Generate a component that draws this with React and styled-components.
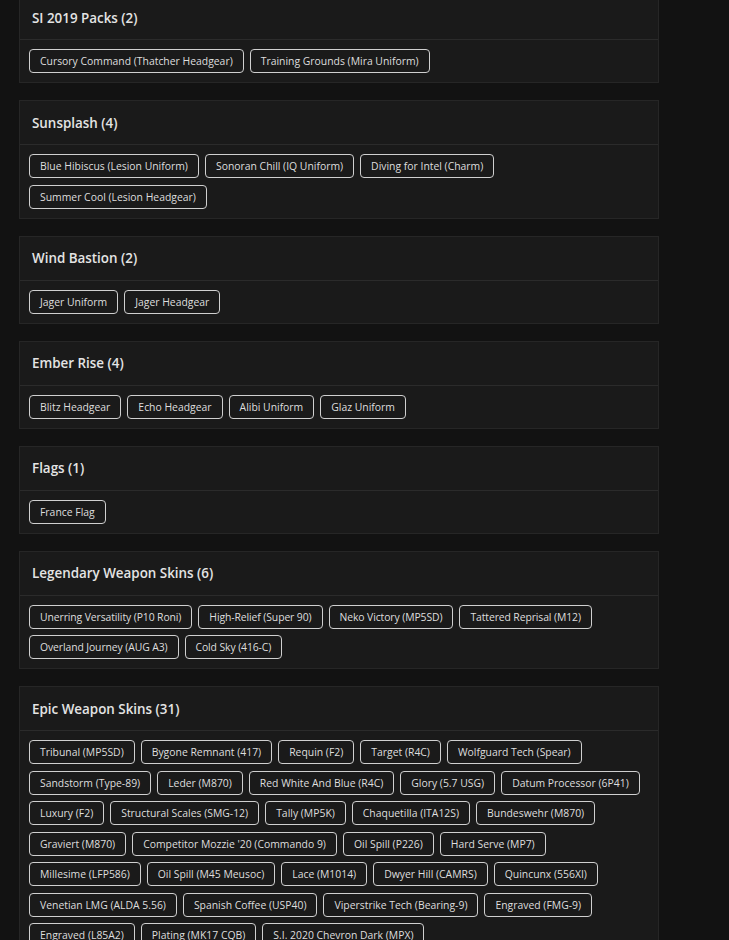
import React from "react";
import styled, { createGlobalStyle } from "styled-components";

const Global = createGlobalStyle`
  html, body { margin: 0; padding: 0; background: #121212; }
  body { font-family: "Open Sans", "DejaVu Sans", sans-serif; color: #e2e2e2; }
`;

const Page = styled.div`
  display: flex;
  flex-direction: column;
  gap: 17px;
  width: 640px;
  padding-left: 19px;
  margin-top: -5px;
`;

const Card = styled.section`
  background: #1a1a1a;
  border: 1px solid #262626;
  box-sizing: border-box;
`;

const Header = styled.div`
  height: 43px;
  display: flex;
  align-items: center;
  padding: 0 12px;
  border-bottom: 1px solid #2b2b2b;
  font-size: 13.4px;
  font-weight: 600;
  color: #e4e4e4;
`;

const Body = styled.div`
  display: flex;
  flex-wrap: wrap;
  gap: 6.5px 6px;
  padding: 9px 9px 9px;
`;

const Tag = styled.span`
  display: inline-flex;
  align-items: center;
  height: 24px;
  box-sizing: border-box;
  padding: 0 10px;
  border: 1px solid #cfcfcf;
  border-radius: 4px;
  font-size: 10.4px;
  color: #dedede;
  letter-spacing: ${(p) => (p.$narrow ? "-0.1px" : "0")};
  white-space: nowrap;
`;

const sections = [
  ["SI 2019 Packs", ["Cursory Command (Thatcher Headgear)", "Training Grounds (Mira Uniform)"]],
  ["Sunsplash", ["Blue Hibiscus (Lesion Uniform)", "Sonoran Chill (IQ Uniform)", "Diving for Intel (Charm)", "Summer Cool (Lesion Headgear)"]],
  ["Wind Bastion", ["Jager Uniform", "Jager Headgear"]],
  ["Ember Rise", ["Blitz Headgear", "Echo Headgear", "Alibi Uniform", "Glaz Uniform"]],
  ["Flags", ["France Flag"]],
  ["Legendary Weapon Skins", ["Unerring Versatility (P10 Roni)", "High-Relief (Super 90)", "Neko Victory (MP5SD)", "Tattered Reprisal (M12)", "Overland Journey (AUG A3)", "Cold Sky (416-C)"], true],
  ["Epic Weapon Skins", [
    "Tribunal (MP5SD)", "Bygone Remnant (417)", "Requin (F2)", "Target (R4C)", "Wolfguard Tech (Spear)",
    "Sandstorm (Type-89)", "Leder (M870)", "Red White And Blue (R4C)", "Glory (5.7 USG)", "Datum Processor (6P41)",
    "Luxury (F2)", "Structural Scales (SMG-12)", "Tally (MP5K)", "Chaquetilla (ITA12S)", "Bundeswehr (M870)",
    "Graviert (M870)", "Competitor Mozzie '20 (Commando 9)", "Oil Spill (P226)", "Hard Serve (MP7)",
    "Millesime (LFP586)", "Oil Spill (M45 Meusoc)", "Lace (M1014)", "Dwyer Hill (CAMRS)", "Quincunx (556XI)",
    "Venetian LMG (ALDA 5.56)", "Spanish Coffee (USP40)", "Viperstrike Tech (Bearing-9)", "Engraved (FMG-9)",
    "Engraved (L85A2)", "Plating (MK17 CQB)", "S.I. 2020 Chevron Dark (MPX)"
  ], false, 31],
];

export default function App() {
  return (
    <>
      <Global />
      <Page>
        {sections.map(([title, tags, narrow, count]) => (
          <Card key={title}>
            <Header>{title} ({count ?? tags.length})</Header>
            <Body>
              {tags.map((t, i) => (
                <Tag key={i} $narrow={narrow}>{t}</Tag>
              ))}
            </Body>
          </Card>
        ))}
      </Page>
    </>
  );
}
